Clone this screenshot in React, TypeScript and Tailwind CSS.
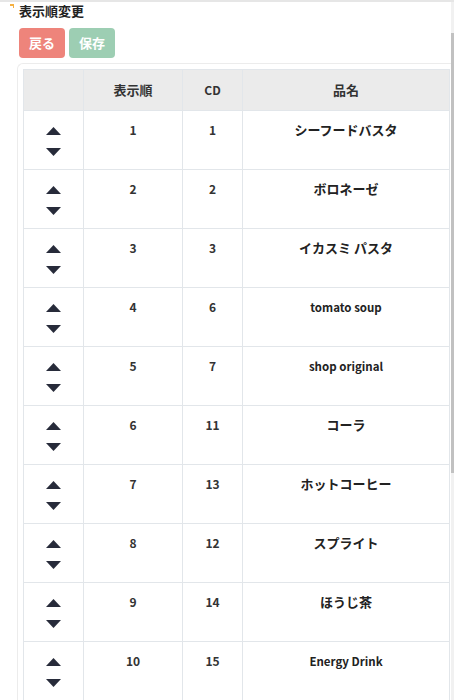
import React from "react";

const rows = [
  { order: 1, cd: 1, name: "シーフードバスタ" },
  { order: 2, cd: 2, name: "ボロネーゼ" },
  { order: 3, cd: 3, name: "イカスミ パスタ" },
  { order: 4, cd: 6, name: "tomato soup" },
  { order: 5, cd: 7, name: "shop original" },
  { order: 6, cd: 11, name: "コーラ" },
  { order: 7, cd: 13, name: "ホットコーヒー" },
  { order: 8, cd: 12, name: "スプライト" },
  { order: 9, cd: 14, name: "ほうじ茶" },
  { order: 10, cd: 15, name: "Energy Drink" },
];

function Up() {
  return (
    <svg width="15" height="8" viewBox="0 0 15 8">
      <path d="M7.5 0 L15 8 L0 8 Z" fill="#272b3a" />
    </svg>
  );
}
function Down() {
  return (
    <svg width="15" height="8" viewBox="0 0 15 8">
      <path d="M0 0 L15 0 L7.5 8 Z" fill="#272b3a" />
    </svg>
  );
}

export default function App() {
  return (
    <div
      className="relative w-[454px] h-[700px] overflow-hidden bg-white border-t-2 border-[#e6e6e6] text-[#333]"
      style={{ fontFamily: '"Noto Sans CJK JP", "Noto Sans", sans-serif' }}
    >
      <div className="absolute left-[10px] top-[2px] w-[4px] h-[2px] bg-[#f5b041]" />
      <div className="absolute left-[13px] top-[3px] w-[1px] h-[3px] bg-[#f5b041]" />
      <div className="absolute right-0 top-0 w-[3px] h-full bg-[#f1f1f1]" />
      <div className="absolute right-0 top-[31px] w-[3px] h-[440px] bg-[#c1c1c1]" />

      <div className="pl-[19px]">
        <div className="text-[13px] font-bold leading-[18px] text-[#222]">表示順変更</div>
        <div className="flex gap-[4px] mt-[8px]">
          <button className="w-[46px] h-[30px] rounded-[4px] bg-[#ee847b] text-white text-[13px] font-bold">
            戻る
          </button>
          <button className="w-[46px] h-[30px] rounded-[4px] bg-[#9dceb3] text-white text-[13px] font-bold">
            保存
          </button>
        </div>
      </div>

      <div className="ml-[17px] mr-[3px] mt-[5px] border-l border-t border-[#ececec] rounded-tl-[6px] pl-[5px] pt-[5px]">
        <table className="border-collapse w-[426px] table-fixed">
          <colgroup>
            <col className="w-[60px]" />
            <col className="w-[99px]" />
            <col className="w-[60px]" />
            <col className="w-[207px]" />
          </colgroup>
          <thead>
            <tr className="h-[41px] bg-[#ebebeb]">
              <th className="border border-[#e2e6ea]"></th>
              <th className="border border-[#e2e6ea] text-[13px] font-bold text-[#333]">表示順</th>
              <th className="border border-[#e2e6ea] text-[12px] font-bold text-[#333]">CD</th>
              <th className="border border-[#e2e6ea] text-[13px] font-bold text-[#333]">品名</th>
            </tr>
          </thead>
          <tbody>
            {rows.map((r) => (
              <tr key={r.order} className="h-[59px]">
                <td className="border border-[#e2e6ea] align-top">
                  <div className="flex flex-col items-center pt-[16px] gap-[13px]">
                    <Up />
                    <Down />
                  </div>
                </td>
                <td className="border border-[#e2e6ea] align-top text-center text-[12px] font-bold pt-[10px] leading-[18px]">
                  {r.order}
                </td>
                <td className="border border-[#e2e6ea] align-top text-center text-[12px] font-bold pt-[10px] leading-[18px]">
                  {r.cd}
                </td>
                <td className="border border-[#e2e6ea] align-top text-center font-bold pt-[7px] leading-[20px] text-[#222]">
                  <span className={/^[A-Za-z]/.test(r.name) ? "text-[11.5px]" : "text-[13px]"}>{r.name}</span>
                </td>
              </tr>
            ))}
          </tbody>
        </table>
      </div>
    </div>
  );
}
